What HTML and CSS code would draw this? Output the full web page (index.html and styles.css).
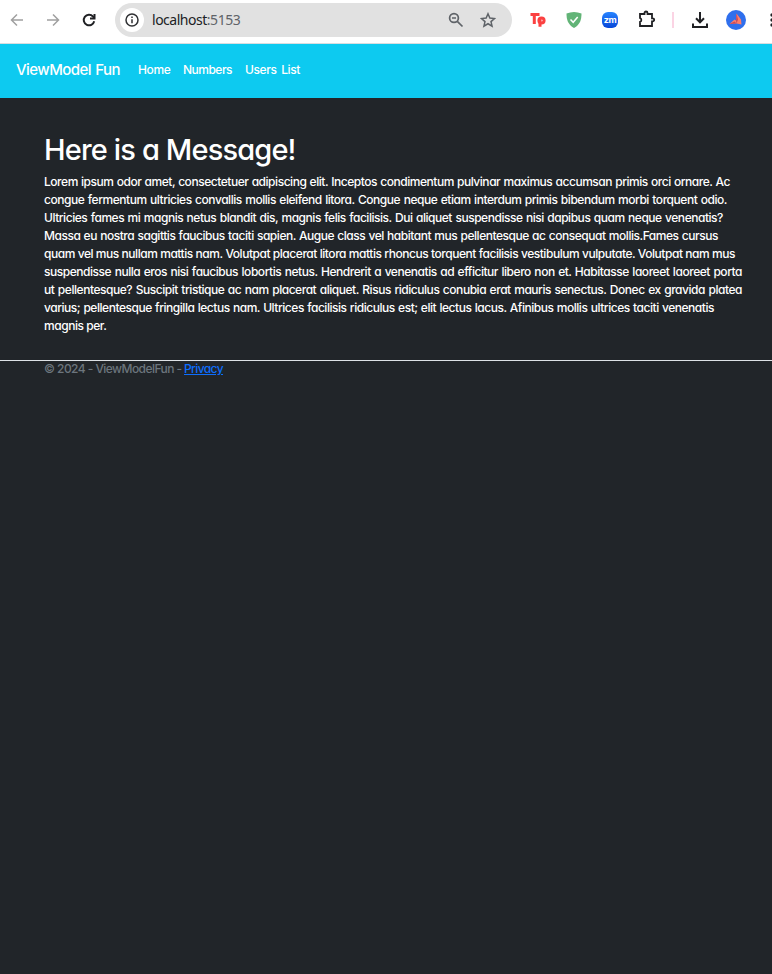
FILE: index.html
```html
<!DOCTYPE html>
<html lang="en">
<head>
<meta charset="utf-8">
<title>ViewModel Fun</title>
<link rel="stylesheet" href="styles.css">
</head>
<body>
<div class="toolbar">
  <svg class="icon back" viewBox="0 0 16 16"><path d="M14 8H2.500M8 2.500 2.500 8 8 13.500"/></svg>
  <svg class="icon forward" viewBox="0 0 16 16"><path d="M2 8h11.500M8 2.500 13.500 8 8 13.500"/></svg>
  <svg class="icon reload" viewBox="0 0 16 16"><path d="M13.200 9.200A5.300 5.300 0 1 1 12 4.500L13.500 6"/><path d="M13.500 2v4.500H9"/></svg>
  <div class="address">
    <span class="info"><svg viewBox="0 0 16 16"><circle cx="8" cy="8" r="6"/><path d="M8 7.200v4M8 4.500v1.500"/></svg></span>
    <span class="url">localhost<span class="port">:5153</span></span>
    <svg class="icon zoom" viewBox="0 0 16 16"><circle cx="6" cy="6" r="4.400"/><path d="m9.300 9.300 5.200 5.200M4 6h4"/></svg>
    <svg class="icon star" viewBox="0 0 16 16"><path d="m8 1.800 1.850 4.300 4.650.4-3.500 3.100 1.050 4.600L8 11.750 3.950 14.200 5 9.600 1.500 6.500l4.650-.4z"/></svg>
  </div>
  <svg class="tp" viewBox="0 0 16 16"><path d="M.5 2.500h9M4.300 2.500V12M10 14.800V6.500"/><circle cx="11.500" cy="8.500" r="2.600"/></svg>
  <svg class="shield" viewBox="0 0 16 16"><path class="shield-body" d="M8 0c2.500 0 5 .5 7.500 1.500C15.500 8 14 12.500 8 16 2 12.500.5 8 .5 1.500 3 .5 5.500 0 8 0z"/><path class="shield-check" d="m4.500 7.500 2.700 2.800L11.700 5"/></svg>
  <span class="zm">zm</span>
  <svg class="icon puzzle" viewBox="0 0 18 18"><path d="M2 4h4.500V3a1.500 1.500 0 0 1 3 0v1H14v4.300h.7a1.500 1.500 0 0 1 0 3H14V16H2v-4.200a2 2 0 0 0 0-3.800z"/></svg>
  <span class="divider"></span>
  <svg class="icon download" viewBox="0 0 16 16"><path d="M8 0v10M4 6.300l4 4 4-4M1 11.500V15h14v-3.500"/></svg>
  <svg class="avatar" viewBox="0 0 20 20"><circle cx="10" cy="10" r="10"/><path class="wing" d="M10.500 3.500 15 9.500l.5 5-5-1-7 .5 5-4.500 1.500 1z"/><path class="fold" d="m10.500 3.500-.5 7 .5 3 1.500-4zM3.500 14l5-2.500 2 2z"/></svg>
  <svg class="more" viewBox="0 0 4 16"><circle cx="2" cy="3" r="1.700"/><circle cx="2" cy="8" r="1.700"/><circle cx="2" cy="13" r="1.700"/></svg>
</div>
<header class="navbar">
  <a class="brand fit">ViewModel Fun</a>
  <nav><a class="fit home">Home</a><a class="fit numbers">Numbers</a><a class="fit users">Users List</a></nav>
</header>
<main>
  <h1>Here is a Message!</h1>
  <p>
    <span class="line l1">Lorem ipsum odor amet, consectetuer adipiscing elit. Inceptos condimentum pulvinar maximus accumsan primis orci ornare. Ac</span>
    <span class="line l2">congue fermentum ultricies convallis mollis eleifend litora. Congue neque etiam interdum primis bibendum morbi torquent odio.</span>
    <span class="line l3">Ultricies fames mi magnis netus blandit dis, magnis felis facilisis. Dui aliquet suspendisse nisi dapibus quam neque venenatis?</span>
    <span class="line l4">Massa eu nostra sagittis faucibus taciti sapien. Augue class vel habitant mus pellentesque ac consequat mollis.Fames cursus</span>
    <span class="line l5">quam vel mus nullam mattis nam. Volutpat placerat litora mattis rhoncus torquent facilisis vestibulum vulputate. Volutpat nam mus</span>
    <span class="line l6">suspendisse nulla eros nisi faucibus lobortis netus. Hendrerit a venenatis ad efficitur libero non et. Habitasse laoreet laoreet porta</span>
    <span class="line l7">ut pellentesque? Suscipit tristique ac nam placerat aliquet. Risus ridiculus conubia erat mauris senectus. Donec ex gravida platea</span>
    <span class="line l8">varius; pellentesque fringilla lectus nam. Ultrices facilisis ridiculus est; elit lectus lacus. Afinibus mollis ultrices taciti venenatis</span>
    <span class="line l9">magnis per.</span>
  </p>
</main>
<footer><span class="copy">© 2024 - ViewModelFun - </span><a class="privacy">Privacy</a></footer>
</body>
</html>
```

FILE: styles.css
```css
* { box-sizing: border-box; }
body {
  margin: 0;
  min-height: 974px;
  overflow: hidden;
  background: #212529;
  color: #fff;
  font: 550 12px/18px Inter, "Liberation Sans", sans-serif;
  font-feature-settings: "cv11";
}
svg { display: block; flex: none; }
.toolbar {
  display: flex;
  align-items: center;
  width: 790px;
  height: 44px;
  padding: 0 0 4px 9px;
  background: #fff;
  border-bottom: 1px solid #d8dde0;
}
.icon { width: 16px; height: 16px; fill: none; stroke: #202124; stroke-width: 1.7; }
.back, .forward { stroke: #a0a0a0; stroke-width: 1.5; }
.forward { margin-left: 20px; }
.reload { margin-left: 20px; stroke-width: 2; }
.address {
  display: flex;
  align-items: center;
  flex: none;
  width: 397px;
  height: 34px;
  margin-left: 18px;
  padding: 0 16px 0 5px;
  border-radius: 17px;
  background: #e1e1e1;
}
.info { display: grid; place-items: center; width: 24px; height: 24px; border-radius: 50%; background: #fff; }
.info svg { width: 16px; height: 16px; fill: none; stroke: #303134; stroke-width: 1.5; }
.url { margin-left: 8px; color: #202124; font: 400 14px/20px "Noto Sans", sans-serif; letter-spacing: -.48px; }
.port { color: #5f6368; }
.zoom { margin-left: auto; stroke: #5f6368; }
.star { margin-left: 16px; stroke: #5f6368; stroke-width: 1.5; }
.tp { width: 16px; height: 16px; margin-left: 18px; fill: none; stroke: #fb4141; stroke-width: 3; }
.shield { width: 16px; height: 16px; margin-left: 20px; }
.shield-body { fill: #62b477; }
.shield-check { fill: none; stroke: #fff; stroke-width: 1.5; }
.zm {
  flex: none;
  width: 16px;
  height: 16px;
  margin-left: 20px;
  border-radius: 6px;
  background: linear-gradient(#2784ff, #0746d8);
  font: 700 9px/15px Inter, sans-serif;
  letter-spacing: -.4px;
  text-align: center;
}
.puzzle { width: 18px; height: 18px; margin: -2px 0 0 20px; stroke-width: 1.8; }
.divider { flex: none; width: 2px; height: 16px; margin-left: 16px; background: #fbd4e4; }
.download { margin-left: 18px; stroke-width: 2; }
.avatar { width: 20px; height: 20px; margin-left: 18px; fill: #2f6fed; }
.avatar .wing { fill: #ff7d69; }
.avatar .fold { fill: #c94a5c; }
.more { width: 4px; height: 16px; margin-left: 24px; fill: #202124; }
.navbar { display: flex; align-items: center; height: 54px; padding: 0 16px 2px; background: #0dcaf0; }
.fit, h1, .line, .copy, .privacy { display: block; white-space: nowrap; text-align-last: justify; }
.brand { width: 104px; font-size: 15px; line-height: 24px; letter-spacing: -.55px; }
nav { display: flex; gap: 12px; margin-left: 18px; }
.home { width: 33px; letter-spacing: -.4px; }
.numbers { width: 50px; letter-spacing: -.5px; }
.users { width: 55px; letter-spacing: -.4px; }
main { padding: 34px 24px 0 44px; }
h1 { width: 250px; margin: 0 0 6px; font-size: 29px; line-height: 35px; font-weight: 450; letter-spacing: -.85px; }
p { margin: 0; }
.line { letter-spacing: -.46px; }
.l1 { width: 686px; }
.l2 { width: 683px; }
.l3 { width: 679px; }
.l4 { width: 674px; }
.l5 { width: 691px; }
.l6 { width: 698px; }
.l7 { width: 698px; }
.l8 { width: 670px; }
.l9 { width: 62px; }
footer { display: flex; margin-top: 25px; padding: 0 44px; border-top: 1px solid #dee2e6; line-height: 16px; }
.copy { width: 137px; color: #6c757d; font-weight: 500; letter-spacing: -.55px; }
.privacy { width: 39px; margin-left: 3px; color: #0d6efd; text-decoration: underline; letter-spacing: -.6px; }
```
